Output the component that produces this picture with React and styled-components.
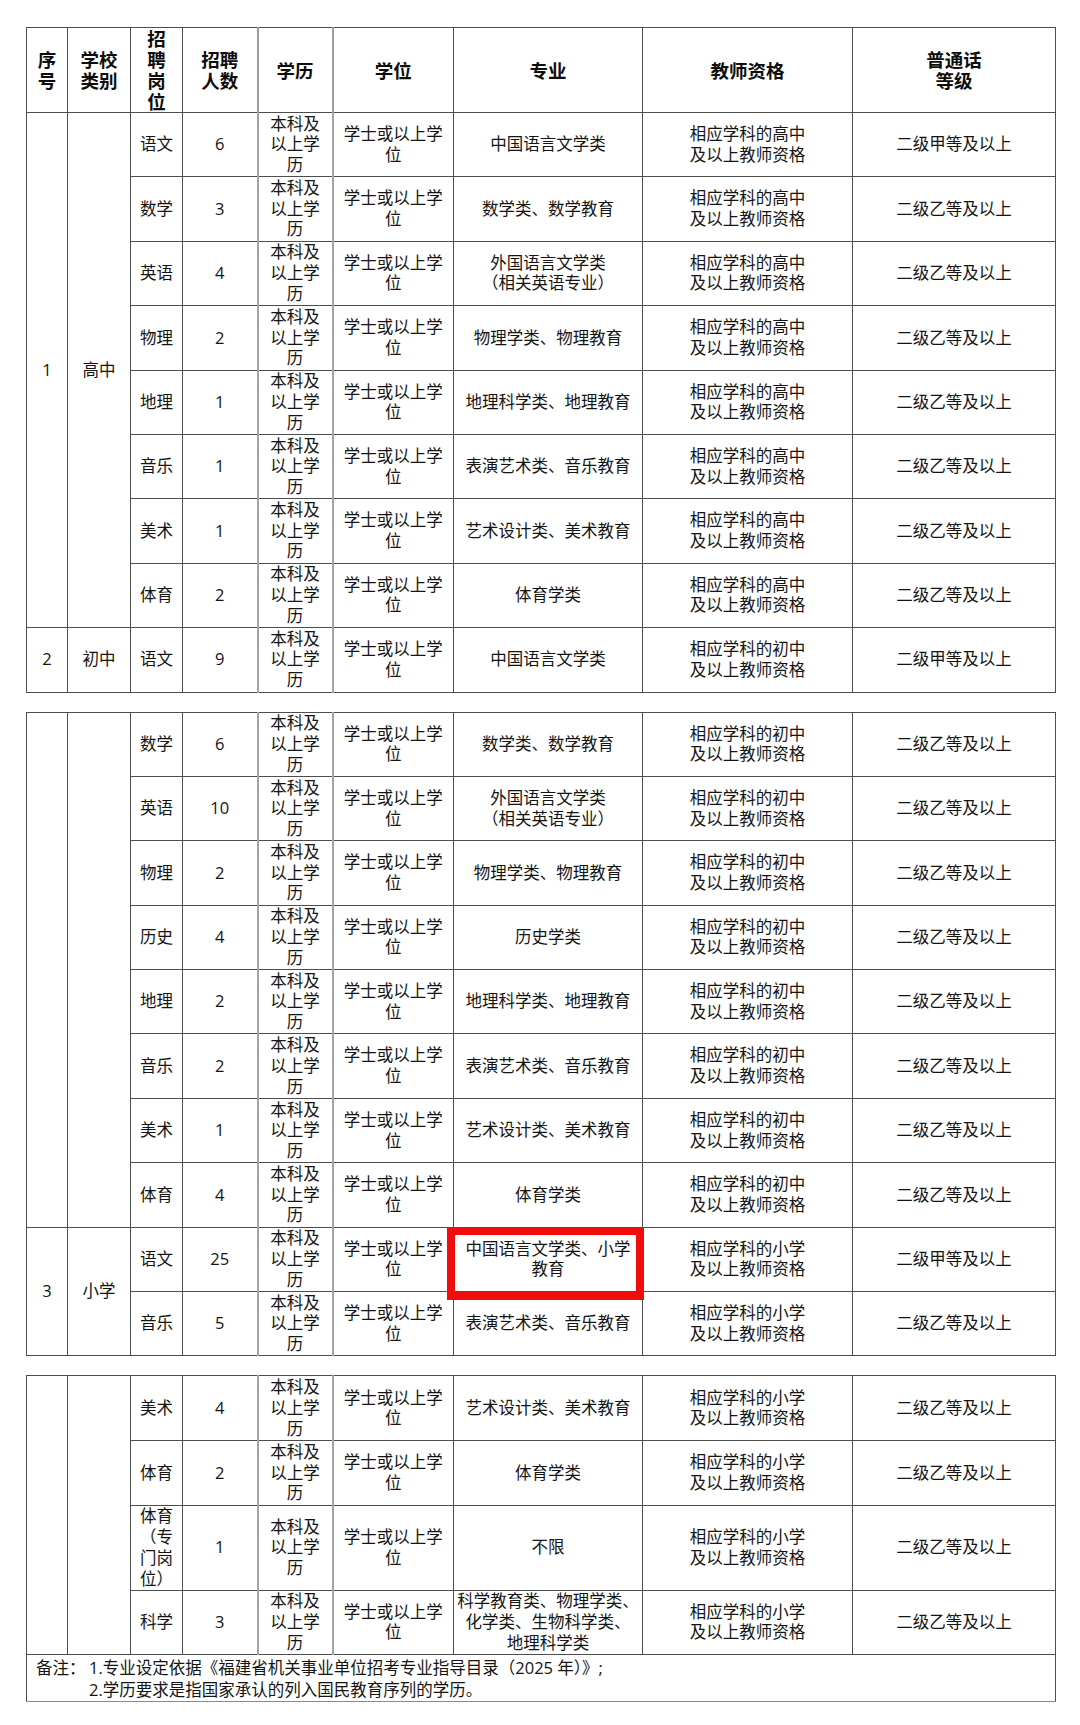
import React from 'react';
import styled, { createGlobalStyle } from 'styled-components';

const GlobalStyle = createGlobalStyle`
  html, body {
    margin: 0;
    background: #fff;
  }
  body {
    font-family: "Open Sans", "Noto Sans CJK SC", sans-serif;
    color: #141414;
  }
`;

const Page = styled.div`
  width: 1080px;
  box-sizing: border-box;
  padding: 27px 0 20px 26px;
  display: flex;
  flex-direction: column;
  gap: 19px;
`;

const Table = styled.table`
  width: 1029px;
  table-layout: fixed;
  border-collapse: collapse;
  font-size: 16.5px;
  line-height: 20.7px;
`;

const Row = styled.tr`
  height: ${(p) => p.$h || 64.4}px;
`;

const Th = styled.th`
  border: 1px solid #4d4d4d;
  padding: 0;
  font-size: 18.5px;
  line-height: 21px;
  font-weight: 700;
  color: #0d0d0d;
  text-align: center;
  vertical-align: middle;
  ${(p) => p.$soft && 'border-left: 2px solid #9c9c9c;'}
`;

const Td = styled.td`
  position: relative;
  border: 1px solid #4d4d4d;
  padding: 0 2px;
  text-align: center;
  vertical-align: middle;
  white-space: nowrap;
  ${(p) => p.$soft && 'border-left: 2px solid #a3a3a3;'}
`;

const NoteCell = styled.td`
  border: 1px solid #4d4d4d;
  border-bottom-color: #8a8a8a;
  padding: 2px 0 0 9px;
  vertical-align: middle;
`;

const Note = styled.div`
  display: flex;
  line-height: 22px;
`;

const NoteLabel = styled.span`
  width: 53px;
  flex: none;
`;

const NoteLines = styled.div`
  display: flex;
  flex-direction: column;
`;

const Mark = styled.div`
  position: absolute;
  left: -7px;
  top: -1px;
  width: 197px;
  height: 73px;
  box-sizing: border-box;
  border: 8px solid #f20d0d;
  pointer-events: none;
`;

const Lines = ({ text }) =>
  text.split('\n').map((line, i) => (
    <React.Fragment key={i}>
      {i > 0 && <br />}
      {line}
    </React.Fragment>
  ));

const EDU = '本科及\n以上学\n历';
const DEG = '学士或以上学\n位';
const cert = (lvl) => `相应学科的${lvl}\n及以上教师资格`;
const A = '二级甲等及以上';
const B = '二级乙等及以上';

const tables = [
  [
    { lead: ['1', '高中', 8], post: '语文', n: '6', major: '中国语言文学类', lvl: '高中', pth: A },
    { post: '数学', n: '3', major: '数学类、数学教育', lvl: '高中', pth: B },
    { post: '英语', n: '4', major: '外国语言文学类\n（相关英语专业）', lvl: '高中', pth: B },
    { post: '物理', n: '2', major: '物理学类、物理教育', lvl: '高中', pth: B },
    { post: '地理', n: '1', major: '地理科学类、地理教育', lvl: '高中', pth: B },
    { post: '音乐', n: '1', major: '表演艺术类、音乐教育', lvl: '高中', pth: B },
    { post: '美术', n: '1', major: '艺术设计类、美术教育', lvl: '高中', pth: B },
    { post: '体育', n: '2', major: '体育学类', lvl: '高中', pth: B },
    { lead: ['2', '初中', 1], post: '语文', n: '9', major: '中国语言文学类', lvl: '初中', pth: A },
  ],
  [
    { lead: ['', '', 8], post: '数学', n: '6', major: '数学类、数学教育', lvl: '初中', pth: B },
    { post: '英语', n: '10', major: '外国语言文学类\n（相关英语专业）', lvl: '初中', pth: B },
    { post: '物理', n: '2', major: '物理学类、物理教育', lvl: '初中', pth: B },
    { post: '历史', n: '4', major: '历史学类', lvl: '初中', pth: B },
    { post: '地理', n: '2', major: '地理科学类、地理教育', lvl: '初中', pth: B },
    { post: '音乐', n: '2', major: '表演艺术类、音乐教育', lvl: '初中', pth: B },
    { post: '美术', n: '1', major: '艺术设计类、美术教育', lvl: '初中', pth: B },
    { post: '体育', n: '4', major: '体育学类', lvl: '初中', pth: B },
    { lead: ['3', '小学', 2], post: '语文', n: '25', major: '中国语言文学类、小学\n教育', lvl: '小学', pth: A, mark: true },
    { post: '音乐', n: '5', major: '表演艺术类、音乐教育', lvl: '小学', pth: B },
  ],
  [
    { lead: ['', '', 4], post: '美术', n: '4', major: '艺术设计类、美术教育', lvl: '小学', pth: B, h: 65 },
    { post: '体育', n: '2', major: '体育学类', lvl: '小学', pth: B },
    { post: '体育\n（专\n门岗\n位）', n: '1', major: '不限', lvl: '小学', pth: B, h: 85 },
    { post: '科学', n: '3', major: '科学教育类、物理学类、\n化学类、生物科学类、\n地理科学类', lvl: '小学', pth: B, h: 64 },
  ],
];

const widths = [41, 63, 52, 75, 75, 121, 189, 210, 203];

function Cols() {
  return (
    <colgroup>
      {widths.map((w, i) => (
        <col key={i} style={{ width: w }} />
      ))}
    </colgroup>
  );
}

function Header() {
  return (
    <Row $h={85}>
      <Th><Lines text={'序\n号'} /></Th>
      <Th><Lines text={'学校\n类别'} /></Th>
      <Th><Lines text={'招\n聘\n岗\n位'} /></Th>
      <Th><Lines text={'招聘\n人数'} /></Th>
      <Th $soft>学历</Th>
      <Th $soft>学位</Th>
      <Th>专业</Th>
      <Th>教师资格</Th>
      <Th><Lines text={'普通话\n等级'} /></Th>
    </Row>
  );
}

function DataRow({ r }) {
  return (
    <Row $h={r.h}>
      {r.lead && (
        <>
          <Td rowSpan={r.lead[2]}>{r.lead[0]}</Td>
          <Td rowSpan={r.lead[2]}>{r.lead[1]}</Td>
        </>
      )}
      <Td><Lines text={r.post} /></Td>
      <Td>{r.n}</Td>
      <Td $soft><Lines text={EDU} /></Td>
      <Td $soft><Lines text={DEG} /></Td>
      <Td>
        <Lines text={r.major} />
        {r.mark && <Mark />}
      </Td>
      <Td><Lines text={cert(r.lvl)} /></Td>
      <Td>{r.pth}</Td>
    </Row>
  );
}

export default function App() {
  return (
    <Page>
      <GlobalStyle />
      {tables.map((rows, ti) => (
        <Table key={ti}>
          <Cols />
          <tbody>
            {ti === 0 && <Header />}
            {rows.map((r, i) => (
              <DataRow key={i} r={r} />
            ))}
            {ti === 2 && (
              <Row $h={47.6}>
                <NoteCell colSpan={9}>
                  <Note>
                    <NoteLabel>备注：</NoteLabel>
                    <NoteLines>
                      <span>1.专业设定依据《福建省机关事业单位招考专业指导目录（2025 年）》;</span>
                      <span>2.学历要求是指国家承认的列入国民教育序列的学历。</span>
                    </NoteLines>
                  </Note>
                </NoteCell>
              </Row>
            )}
          </tbody>
        </Table>
      ))}
    </Page>
  );
}
